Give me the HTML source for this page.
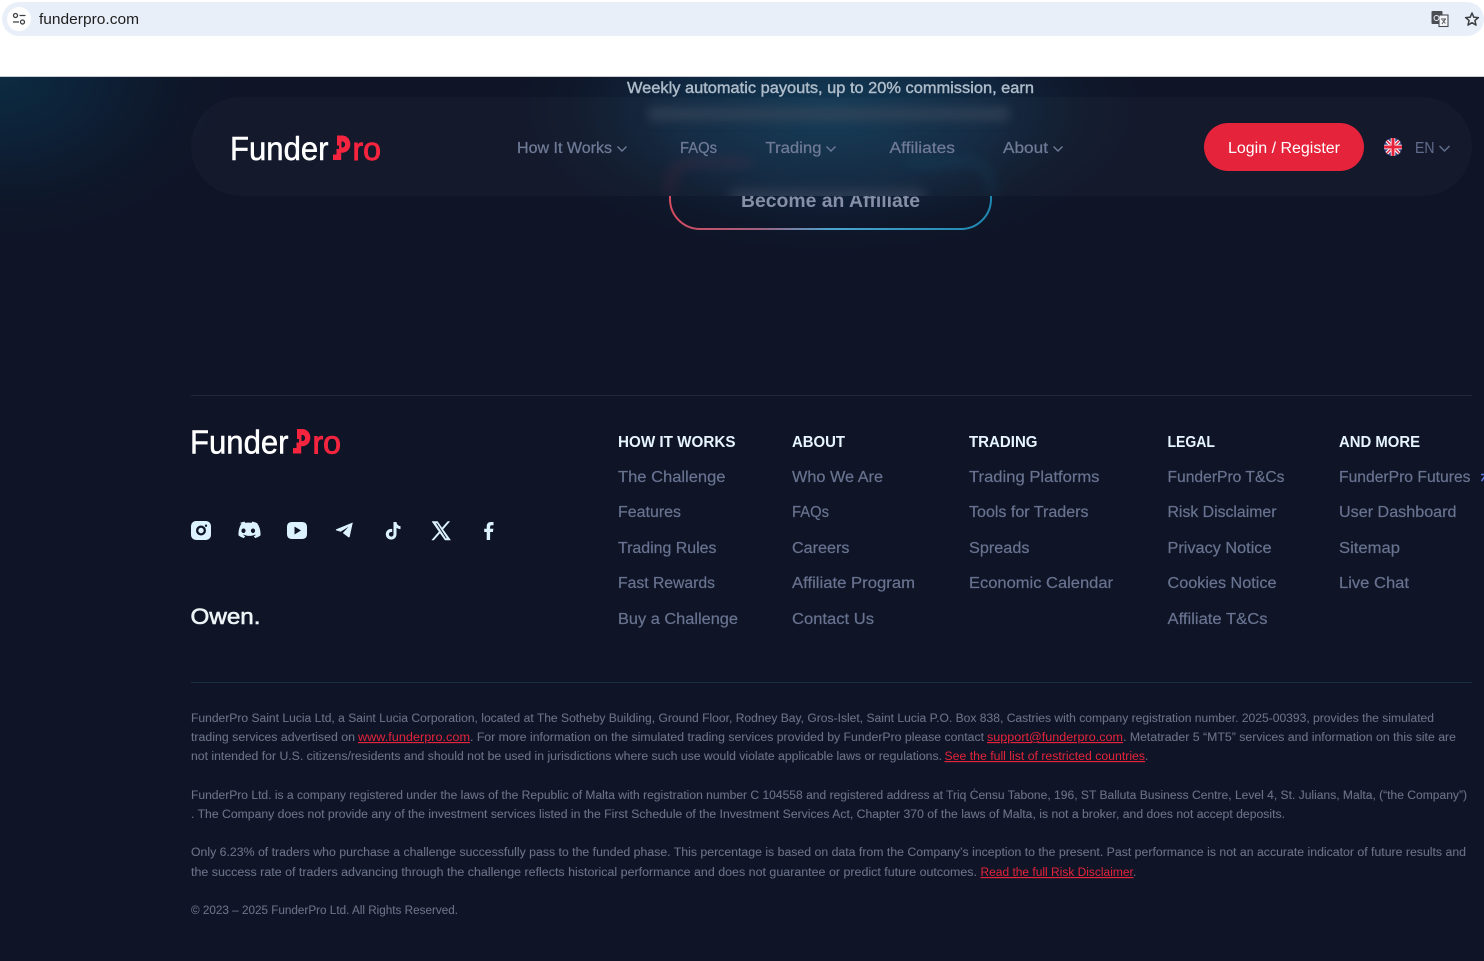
<!DOCTYPE html>
<html lang="en"><head><meta charset="utf-8"><title>FunderPro</title>
<style>
html,body{margin:0;padding:0;width:1484px;height:961px;overflow:hidden;background:#0f1527}
svg{display:block}
text{font-family:"Liberation Sans",sans-serif;white-space:pre}
.n{font-size:15.5px;fill:#6f7a97;stroke:#6f7a97;stroke-width:.25}
.h{font-size:15.5px;font-weight:bold;fill:#e6f5ff}
.l{font-size:15.5px;fill:#687390;stroke:#687390;stroke-width:.2}
.t{font-size:11.5px;fill:#6b7288;stroke:#6b7288;stroke-width:.08}
.r{font-size:11.5px;fill:#e5233b;text-decoration:underline}
.lg{font-size:33px;fill:#fff;stroke:#fff;stroke-width:.5}
.lr{font-size:32px;fill:#f5243f;stroke:#f5243f;stroke-width:.9}
</style></head><body>
<svg width="1484" height="961" viewBox="0 0 1484 961" xmlns="http://www.w3.org/2000/svg">
<defs>
<radialGradient id="g1" gradientUnits="userSpaceOnUse" cx="0" cy="0" r="250" gradientTransform="translate(0 77) scale(1 .7)"><stop offset="0" stop-color="#0c2b41"/><stop offset=".4" stop-color="#0d2036"/><stop offset="1" stop-color="#0f1527" stop-opacity="0"/></radialGradient>
<radialGradient id="g2" gradientUnits="userSpaceOnUse" cx="0" cy="0" r="330" gradientTransform="translate(830 110) scale(1 .45)"><stop offset="0" stop-color="#123a55"/><stop offset=".5" stop-color="#10263f"/><stop offset="1" stop-color="#0f1527" stop-opacity="0"/></radialGradient>
<linearGradient id="bd" x1="669" x2="991" y1="0" y2="0" gradientUnits="userSpaceOnUse"><stop offset="0" stop-color="#d64a5f"/><stop offset=".28" stop-color="#a0607f"/><stop offset=".5" stop-color="#4ca3cf"/><stop offset="1" stop-color="#1e88b0"/></linearGradient>
<filter id="b6" x="-20%" y="-200%" width="140%" height="500%"><feGaussianBlur stdDeviation="5"/></filter>
<filter id="b3" x="-20%" y="-100%" width="140%" height="300%"><feGaussianBlur stdDeviation="6"/></filter>
<clipPath id="below"><rect x="0" y="196" width="1484" height="60"/></clipPath>
<clipPath id="top"><rect x="191" y="97" width="1281" height="99" rx="50"/></clipPath>
<clipPath id="fc"><circle cx="1393" cy="147" r="9"/></clipPath>
</defs>

<rect width="1484" height="961" fill="#0f1527"/>
<rect y="77" width="1484" height="260" fill="url(#g1)"/>
<rect y="77" width="1484" height="220" fill="url(#g2)"/>

<!-- browser -->
<rect width="1484" height="76" fill="#fff"/>
<rect y="76" width="1484" height="1" fill="#c9ccd0"/>
<rect x="2" y="2" width="1482" height="34" rx="17" fill="#e9eff9"/>
<circle cx="19" cy="19" r="12" fill="#fff"/>
<g fill="none" stroke="#3c4043" stroke-width="1.3"><circle cx="15.5" cy="15.5" r="2"/><path d="M19.5 15.5h6M13 22h6"/><circle cx="22.5" cy="22" r="2"/></g>
<text x="39" y="24" font-size="15" fill="#1f1f1f" textLength="100" lengthAdjust="spacingAndGlyphs">funderpro.com</text>
<g>
<rect x="1431.500" y="11" width="11" height="13" rx="1" fill="#4a4d51"/>
<rect x="1439" y="15" width="9" height="11.500" fill="#f4f6fa" stroke="#4a4d51" stroke-width="1.100"/>
<circle cx="1436.500" cy="18" r="2.500" fill="none" stroke="#e9eff9" stroke-width="1"/>
<path d="M1441 19h5M1445.500 19l-3.500 5M1442.500 20l3 3.500" stroke="#4a4d51" stroke-width=".9" fill="none"/>
</g>
<path d="M1472 13l1.800 4.200 4.600.4-3.500 3 1.100 4.500-4-2.400-4 2.400 1.100-4.500-3.500-3 4.600-.4z" fill="none" stroke="#3c4043" stroke-width="1.500" stroke-linejoin="round"/>

<!-- hero remnants -->
<text x="627" y="93" font-size="15.500" fill="#aebcca" stroke="#aebcca" stroke-width=".4" textLength="407" lengthAdjust="spacingAndGlyphs">Weekly automatic payouts, up to 20% commission, earn</text>
<g clip-path="url(#below)">
<rect x="670" y="150" width="321" height="79" rx="30" fill="none" stroke="url(#bd)" stroke-width="2"/>
<text x="741" y="207" font-size="19" font-weight="bold" fill="#858fa6" textLength="179" lengthAdjust="spacingAndGlyphs">Become an Affiliate</text>
</g>

<!-- nav pill -->
<rect x="191" y="97" width="1281" height="99" rx="50" fill="#fff" fill-opacity=".022"/>
<g clip-path="url(#top)">
<rect x="648" y="107" width="362" height="14" rx="6" fill="#38465a" opacity=".65" filter="url(#b6)"/>
<path d="M670 196v-12c0-12 8-22 22-22h60" fill="none" stroke="#c23a52" stroke-width="5" opacity=".2" filter="url(#b3)"/>
<path d="M991 196v-12c0-12-8-22-22-22h-60" fill="none" stroke="#1e88b0" stroke-width="5" opacity=".2" filter="url(#b3)"/>
<rect x="730" y="190" width="195" height="14" rx="6" fill="#6b7690" opacity=".3" filter="url(#b3)"/>
</g>

<!-- header logo -->
<g id="lg">
<text class="lg" x="230" y="160" textLength="98.500" lengthAdjust="spacingAndGlyphs">Funder</text>
<path fill-rule="evenodd" fill="#f5243f" d="M337 135.500h5c4.800 0 8.300 3.700 8.300 8.600 0 5.200-3.500 8.600-8.300 8.600h-.8v7.300h-8.200v-5.500h3.500v-5.500h2.500v-3.500h-2v-10zM341.500 141.500v6h.8c1.600 0 2.800-1.300 2.800-3 0-1.700-1.200-3-2.800-3z"/>
<text class="lr" x="352.500" y="160" textLength="28.500" lengthAdjust="spacingAndGlyphs">ro</text>
</g>

<!-- nav -->
<text class="n" x="517" y="153" textLength="95" lengthAdjust="spacingAndGlyphs">How It Works</text>
<path d="M617.500 146.500l4.500 4.500 4.500-4.500" fill="none" stroke="#6f7a97" stroke-width="1.400"/>
<text class="n" x="680" y="153" textLength="37" lengthAdjust="spacingAndGlyphs">FAQs</text>
<text class="n" x="765.500" y="153" textLength="56" lengthAdjust="spacingAndGlyphs">Trading</text>
<path d="M826.500 146.500l4.500 4.500 4.500-4.500" fill="none" stroke="#6f7a97" stroke-width="1.400"/>
<text class="n" x="889.500" y="153" textLength="65.500" lengthAdjust="spacingAndGlyphs">Affiliates</text>
<text class="n" x="1003" y="153" textLength="45" lengthAdjust="spacingAndGlyphs">About</text>
<path d="M1053.500 146.500l4.500 4.500 4.500-4.500" fill="none" stroke="#6f7a97" stroke-width="1.400"/>

<rect x="1204" y="123" width="160" height="48" rx="24" fill="#e5233b"/>
<text x="1228" y="153" font-size="15.500" fill="#fff" textLength="112" lengthAdjust="spacingAndGlyphs">Login / Register</text>
<g clip-path="url(#fc)">
<rect x="1384" y="138" width="18" height="18" fill="#3b4a86"/>
<path d="M1384 138l18 18M1402 138l-18 18" stroke="#fff" stroke-width="3.500"/>
<path d="M1384 138l18 18M1402 138l-18 18" stroke="#e5233b" stroke-width="1.500"/>
<path d="M1393 138v18M1384 147h18" stroke="#fff" stroke-width="4.500"/>
<path d="M1393 138v18M1384 147h18" stroke="#e5233b" stroke-width="3"/>
</g>
<text x="1415" y="153" font-size="16" fill="#626d8e" textLength="19.500" lengthAdjust="spacingAndGlyphs">EN</text>
<path d="M1439.500 146l5 5 5-5" fill="none" stroke="#626d8e" stroke-width="1.500"/>

<!-- footer -->
<rect x="191" y="395" width="1281" height="1" fill="#222938"/>
<use href="#lg" transform="translate(-40 293.500)"/>

<!-- socials -->
<g fill="#dcf3ff">
<path fill-rule="evenodd" d="M196 521h10a5 5 0 0 1 5 5v9a5 5 0 0 1-5 5h-10a5 5 0 0 1-5-5v-9a5 5 0 0 1 5-5zM201 525.500a5 5 0 1 0 0 10a5 5 0 0 0 0-10zM201 527.800a2.700 2.700 0 1 1 0 5.400a2.700 2.700 0 0 1 0-5.400zM206 524.500a1.200 1.200 0 1 0 0 2.400a1.200 1.200 0 0 0 0-2.400z"/>
<path fill-rule="evenodd" transform="translate(-1.500 0)" d="M241 523.200c1.700-.8 3.500-1.400 5-1.600l.7 1.300c2.100-.3 4.200-.3 6.300 0l.7-1.300c1.600.2 3.300.8 5 1.600 2.500 3.600 3.600 7.600 3.300 12.200-1.900 1.400-3.700 2.200-5.400 2.700l-1.300-2c.8-.2 1.400-.6 2-1.100l-.5-.4c-3.800 1.700-7.800 1.700-11.600 0l-.5.4c.6.500 1.200.9 2 1.100l-1.300 2c-1.700-.5-3.500-1.300-5.400-2.700-.3-4.600.8-8.600 3-12.200zM245 528.500a2.100 2.300 0 1 0 0 4.600a2.100 2.300 0 0 0 0-4.600zM254.500 528.500a2.100 2.300 0 1 0 0 4.600a2.100 2.300 0 0 0 0-4.600z"/>
<path fill-rule="evenodd" d="M292 522h10c3.200 0 5 1.800 5 5v7c0 3.200-1.800 5-5 5h-10c-3.200 0-5-1.800-5-5v-7c0-3.200 1.800-5 5-5zM294.500 526.500v8l6.500-4z"/>
<path d="M352.800 522.500l-16.500 6.800c-.6.300-.6.900 0 1.100l4.300 1.400 8-5-5.800 6.200 5.600 4.200c.5.400 1.100.1 1.300-.5z"/>
<path d="M393.500 522h3c.2 2.300 1.700 3.900 4 4.100v3c-1.500 0-2.900-.5-4-1.300v6.400c0 3.200-2.400 5.300-5.400 5.300s-5.300-2.400-5.300-5.300c0-3.300 3-5.800 6.400-5.200v3.100c-1.600-.5-3.300.5-3.300 2.200 0 1.300 1 2.300 2.300 2.300s2.300-1 2.300-2.400z"/>
<path fill-rule="evenodd" stroke="#dcf3ff" stroke-width=".5" d="M432 521.500h5.500l4.500 6.500 5.700-6.500h2l-6.800 7.900 7.600 10.600h-5.500l-5-7-6.200 7h-2l7.300-8.400zM435.500 523l10.200 15.500h1.600l-10.200-15.500z"/>
<path d="M486.700 540v-8h-2.500v-3.200h2.500v-2.300c0-3 1.600-4.500 4.300-4.500h2.500v3.200h-1.700c-1.200 0-1.700.6-1.700 1.700v1.900h3.300l-.5 3.200h-2.800v8z"/>
</g>
<text x="190.500" y="624" font-size="22" fill="#eef3f6" stroke="#eef3f6" stroke-width=".6" textLength="70" lengthAdjust="spacingAndGlyphs">Owen.</text>

<!-- columns -->
<text class="h" x="618" y="447" textLength="117.500" lengthAdjust="spacingAndGlyphs">HOW IT WORKS</text>
<text class="l" x="618" y="482" textLength="107.500" lengthAdjust="spacingAndGlyphs">The Challenge</text>
<text class="l" x="618" y="517" textLength="63" lengthAdjust="spacingAndGlyphs">Features</text>
<text class="l" x="618" y="553" textLength="98.500" lengthAdjust="spacingAndGlyphs">Trading Rules</text>
<text class="l" x="618" y="588" textLength="97" lengthAdjust="spacingAndGlyphs">Fast Rewards</text>
<text class="l" x="618" y="624" textLength="120" lengthAdjust="spacingAndGlyphs">Buy a Challenge</text>

<text class="h" x="792" y="447" textLength="53" lengthAdjust="spacingAndGlyphs">ABOUT</text>
<text class="l" x="792" y="482" textLength="91" lengthAdjust="spacingAndGlyphs">Who We Are</text>
<text class="l" x="792" y="517" textLength="37" lengthAdjust="spacingAndGlyphs">FAQs</text>
<text class="l" x="792" y="553" textLength="57.500" lengthAdjust="spacingAndGlyphs">Careers</text>
<text class="l" x="792" y="588" textLength="123" lengthAdjust="spacingAndGlyphs">Affiliate Program</text>
<text class="l" x="792" y="624" textLength="82" lengthAdjust="spacingAndGlyphs">Contact Us</text>

<text class="h" x="969" y="447" textLength="68.500" lengthAdjust="spacingAndGlyphs">TRADING</text>
<text class="l" x="969" y="482" textLength="130.500" lengthAdjust="spacingAndGlyphs">Trading Platforms</text>
<text class="l" x="969" y="517" textLength="119.500" lengthAdjust="spacingAndGlyphs">Tools for Traders</text>
<text class="l" x="969" y="553" textLength="60.500" lengthAdjust="spacingAndGlyphs">Spreads</text>
<text class="l" x="969" y="588" textLength="144" lengthAdjust="spacingAndGlyphs">Economic Calendar</text>

<text class="h" x="1167.500" y="447" textLength="47.500" lengthAdjust="spacingAndGlyphs">LEGAL</text>
<text class="l" x="1167.500" y="482" textLength="117" lengthAdjust="spacingAndGlyphs">FunderPro T&amp;Cs</text>
<text class="l" x="1167.500" y="517" textLength="109" lengthAdjust="spacingAndGlyphs">Risk Disclaimer</text>
<text class="l" x="1167.500" y="553" textLength="104" lengthAdjust="spacingAndGlyphs">Privacy Notice</text>
<text class="l" x="1167.500" y="588" textLength="109" lengthAdjust="spacingAndGlyphs">Cookies Notice</text>
<text class="l" x="1167.500" y="624" textLength="100" lengthAdjust="spacingAndGlyphs">Affiliate T&amp;Cs</text>

<text class="h" x="1339" y="447" textLength="81" lengthAdjust="spacingAndGlyphs">AND MORE</text>
<text class="l" x="1339" y="482" textLength="131.500" lengthAdjust="spacingAndGlyphs">FunderPro Futures</text>
<path d="M1481.500 481l3-4M1481 474.500h3" stroke="#5a78e0" stroke-width="1.500" fill="none"/>
<text class="l" x="1339" y="517" textLength="117.500" lengthAdjust="spacingAndGlyphs">User Dashboard</text>
<text class="l" x="1339" y="553" textLength="61" lengthAdjust="spacingAndGlyphs">Sitemap</text>
<text class="l" x="1339" y="588" textLength="70" lengthAdjust="spacingAndGlyphs">Live Chat</text>

<rect x="191" y="682" width="1281" height="1" fill="#1c2f40"/>

<!-- legal -->
<text class="t" x="191" y="722" textLength="1243" lengthAdjust="spacingAndGlyphs">FunderPro Saint Lucia Ltd, a Saint Lucia Corporation, located at The Sotheby Building, Ground Floor, Rodney Bay, Gros-Islet, Saint Lucia P.O. Box 838, Castries with company registration number. 2025-00393, provides the simulated</text>
<text class="t" x="191" y="741" textLength="164" lengthAdjust="spacingAndGlyphs">trading services advertised on</text>
<text class="r" x="358" y="741" textLength="112" lengthAdjust="spacingAndGlyphs">www.funderpro.com</text>
<text class="t" x="470" y="741" textLength="514" lengthAdjust="spacingAndGlyphs">. For more information on the simulated trading services provided by FunderPro please contact</text>
<text class="r" x="987" y="741" textLength="136" lengthAdjust="spacingAndGlyphs">support@funderpro.com</text>
<text class="t" x="1123" y="741" textLength="333" lengthAdjust="spacingAndGlyphs">. Metatrader 5 “MT5” services and information on this site are</text>
<text class="t" x="191" y="760" textLength="751" lengthAdjust="spacingAndGlyphs">not intended for U.S. citizens/residents and should not be used in jurisdictions where such use would violate applicable laws or regulations.</text>
<text class="r" x="944.500" y="760" textLength="200.500" lengthAdjust="spacingAndGlyphs">See the full list of restricted countries</text>
<text class="t" x="1145" y="760">.</text>
<text class="t" x="191" y="799" textLength="1276" lengthAdjust="spacingAndGlyphs">FunderPro Ltd. is a company registered under the laws of the Republic of Malta with registration number C 104558 and registered address at Triq Ċensu Tabone, 196, ST Balluta Business Centre, Level 4, St. Julians, Malta, (“the Company”)</text>
<text class="t" x="191" y="818" textLength="1094" lengthAdjust="spacingAndGlyphs">. The Company does not provide any of the investment services listed in the First Schedule of the Investment Services Act, Chapter 370 of the laws of Malta, is not a broker, and does not accept deposits.</text>
<text class="t" x="191" y="856" textLength="1275" lengthAdjust="spacingAndGlyphs">Only 6.23% of traders who purchase a challenge successfully pass to the funded phase. This percentage is based on data from the Company’s inception to the present. Past performance is not an accurate indicator of future results and</text>
<text class="t" x="191" y="876" textLength="786" lengthAdjust="spacingAndGlyphs">the success rate of traders advancing through the challenge reflects historical performance and does not guarantee or predict future outcomes.</text>
<text class="r" x="980.500" y="876" textLength="153" lengthAdjust="spacingAndGlyphs">Read the full Risk Disclaimer</text>
<text class="t" x="1133" y="876">.</text>
<text class="t" x="191" y="914" textLength="267" lengthAdjust="spacingAndGlyphs">© 2023 – 2025 FunderPro Ltd. All Rights Reserved.</text>
</svg>
</body></html>
